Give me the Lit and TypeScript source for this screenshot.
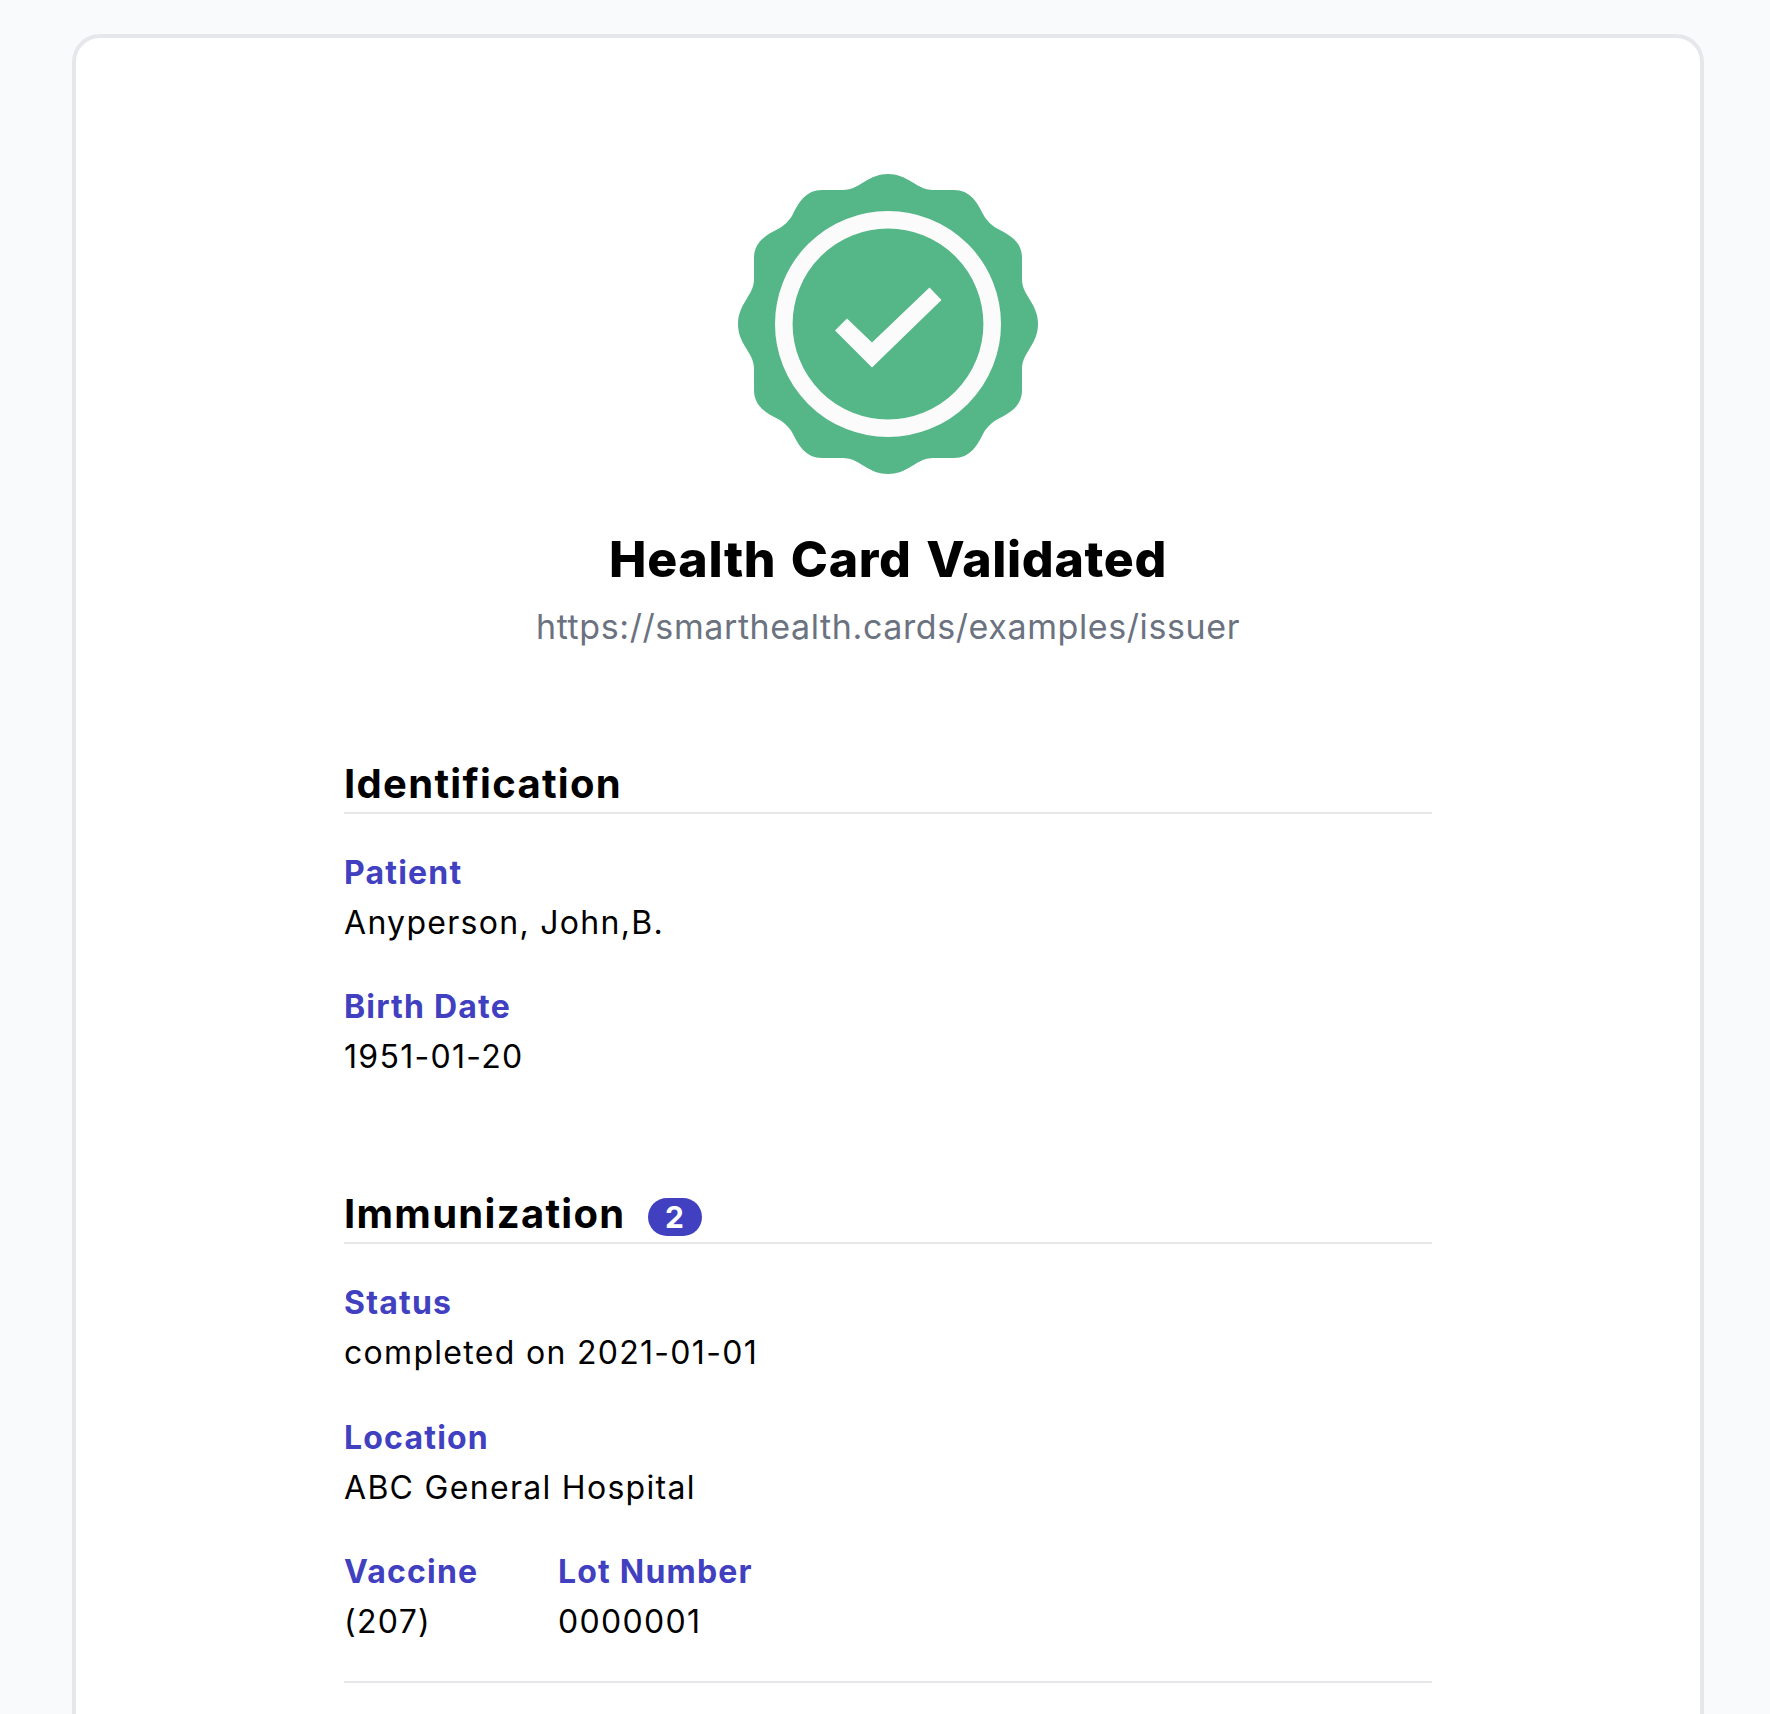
import { LitElement, html, css, svg } from "lit";
import { customElement } from "lit/decorators.js";

type P = [number, number];
const quadrant: P[] = [
  [0, -150], [9, -150], [16, -147], [24, -142],
  [31, -138], [36, -134], [45, -134],
  [52, -134], [59, -134], [66, -134],
  [82, -134], [89, -122], [95, -110],
  [98, -104], [104, -98], [110, -95],
  [122, -89], [134, -82], [134, -66],
  [134, -59], [134, -52], [134, -45],
  [134, -36], [138, -31], [142, -24],
  [147, -16], [150, -9], [150, 0],
];
const right: P[] = [...quadrant, ...quadrant.slice(0, -1).reverse().map(([x, y]) => [x, -y] as P)];
const full: P[] = [...right, ...right.slice(0, -1).reverse().map(([x, y]) => [-x, y] as P)];
const sealPath = () => {
  let d = `M${full[0][0]} ${full[0][1]}`;
  for (let i = 1; i + 2 < full.length; i += 3) {
    d += `C${full[i]} ${full[i + 1]} ${full[i + 2]}`;
  }
  return d + "Z";
};

@customElement("app-root")
export class AppRoot extends LitElement {
  static styles = css`
    :host {
      display: block;
      height: 1714px;
      overflow: hidden;
      background: #f9fafb;
      font-family: "Inter", "Liberation Sans", sans-serif;
      color: #000;
    }
    .card {
      box-sizing: border-box;
      margin: 34px 66px 0 72px;
      min-height: 1800px;
      background: #fff;
      border: 4px solid #e5e7eb;
      border-radius: 28px;
      padding: 136px 268px 0;
    }
    .head {
      display: flex;
      flex-direction: column;
      align-items: center;
    }
    .seal {
      display: block;
      width: 300px;
      height: 300px;
    }
    h1 {
      margin: 53px 0 0;
      font-size: 50px;
      line-height: 64px;
      font-weight: 800;
      letter-spacing: 0.65px;
      word-spacing: 3px;
    }
    .url {
      margin-top: 12px;
      font-size: 34px;
      line-height: 48px;
      letter-spacing: 0.6px;
      color: #6b7280;
    }
    h2 {
      display: flex;
      align-items: center;
      margin: 0;
      height: 56px;
      padding-top: 4px;
      border-bottom: 2px solid #e5e7eb;
      font-size: 40px;
      font-weight: 700;
      line-height: 56px;
      letter-spacing: 1.3px;
    }
    .id { margin-top: 101px; }
    .imm { margin-top: 100px; }
    .pill {
      display: flex;
      align-items: center;
      justify-content: center;
      width: 54px;
      height: 38px;
      margin: 5px 0 0 22px;
      border-radius: 19px;
      background: #4040c0;
      color: #fff;
      font-size: 30px;
      line-height: 38px;
      letter-spacing: 0;
    }
    .fields {
      display: flex;
      flex-direction: column;
      gap: 34.4px;
      padding-top: 34px;
    }
    .row {
      display: flex;
    }
    .col-first {
      width: 214px;
    }
    .label {
      font-size: 32px;
      line-height: 50px;
      font-weight: 700;
      letter-spacing: 1.2px;
      color: #4040c0;
    }
    .value {
      font-size: 32px;
      line-height: 50px;
      letter-spacing: 1.3px;
    }
    .end {
      margin-top: 34px;
      border-top: 2px solid #e5e7eb;
    }
  `;

  private field(label: string, value: string) {
    return html`<div><div class="label">${label}</div><div class="value">${value}</div></div>`;
  }

  render() {
    return html`
      <main class="card">
        <header class="head">
          <svg class="seal" viewBox="-150 -150 300 300" aria-hidden="true">
            ${svg`<path d=${sealPath()} fill="#55b787"></path>
            <circle cx="0" cy="0" r="104.2" fill="none" stroke="#fbfbfb" stroke-width="17.6"></circle>
            <path d="M-53 6.5L-41 -5.5L-16 18.500L41.500 -36.500L53.500 -24L-16 43.500Z" fill="#fbfbfb"></path>`}
          </svg>
          <h1>Health Card Validated</h1>
          <div class="url">https://smarthealth.cards/examples/issuer</div>
        </header>
        <section class="id">
          <h2>Identification</h2>
          <div class="fields">
            ${this.field("Patient", "Anyperson, John,B.")}
            ${this.field("Birth Date", "1951-01-20")}
          </div>
        </section>
        <section class="imm">
          <h2>Immunization<span class="pill">2</span></h2>
          <div class="fields">
            ${this.field("Status", "completed on 2021-01-01")}
            ${this.field("Location", "ABC General Hospital")}
            <div class="row">
              <div class="col-first">${this.field("Vaccine", "(207)")}</div>
              ${this.field("Lot Number", "0000001")}
            </div>
          </div>
          <div class="end"></div>
        </section>
      </main>
    `;
  }
}
